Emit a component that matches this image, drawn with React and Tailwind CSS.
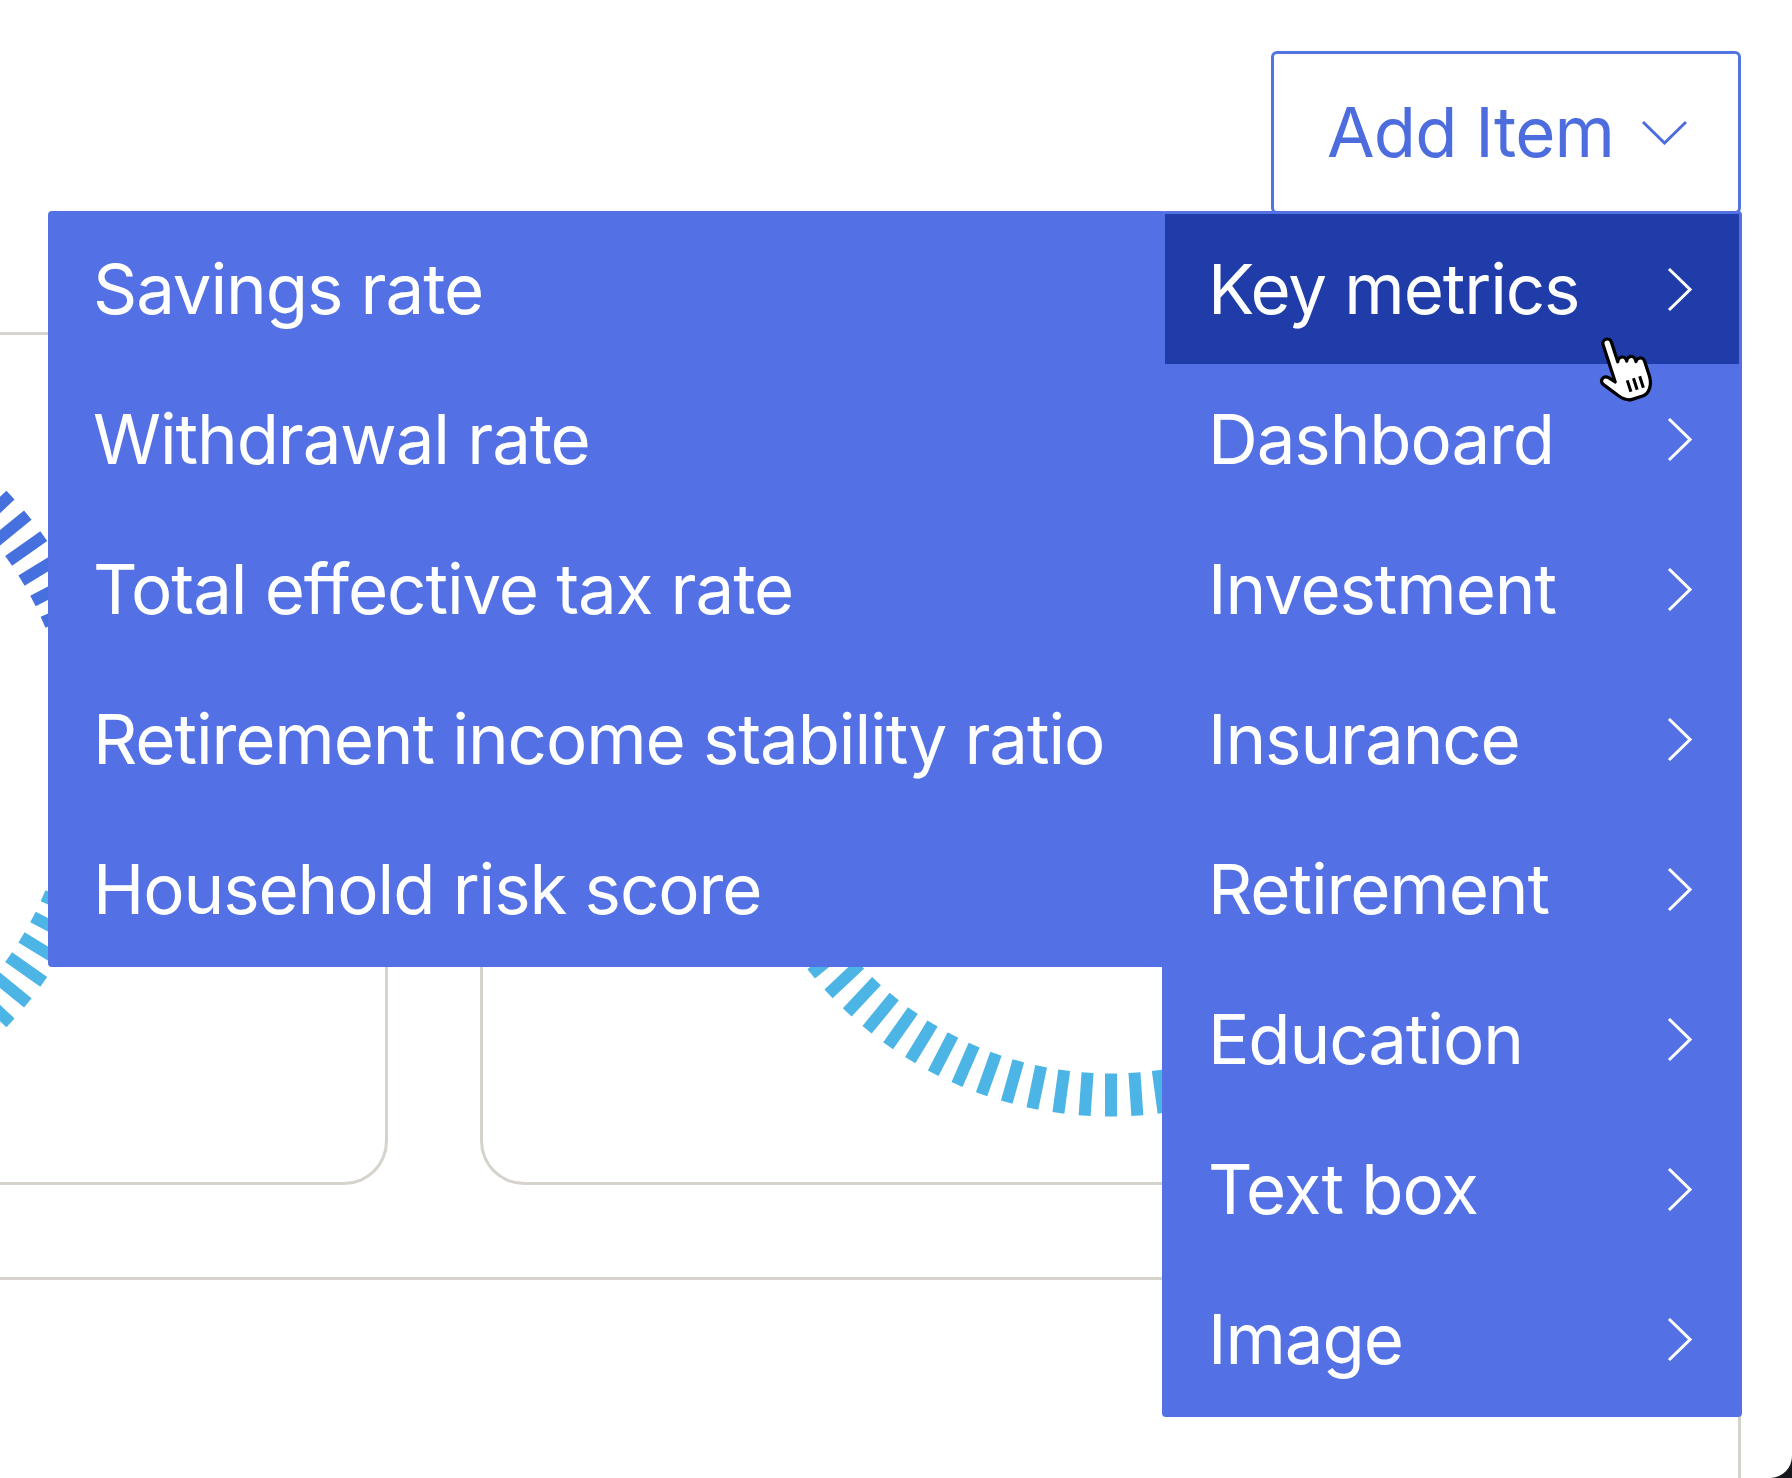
import React from 'react';

const SUB_ITEMS = [
  'Savings rate',
  'Withdrawal rate',
  'Total effective tax rate',
  'Retirement income stability ratio',
  'Household risk score',
];

const MENU_ITEMS = [
  'Key metrics',
  'Dashboard',
  'Investment',
  'Insurance',
  'Retirement',
  'Education',
  'Text box',
  'Image',
];

// Dashed ring gauge drawn as radial ticks
function Gauge({ progressEnd }) {
  const size = 774;
  const c = size / 2;
  const count = 92;
  const rIn = 343.5;
  const rOut = 386.5;
  const ticks = [];
  for (let i = 0; i < count; i++) {
    const deg = -90 + (i * 360) / count;
    const a = (deg * Math.PI) / 180;
    ticks.push(
      <line
        key={i}
        x1={c + rIn * Math.cos(a)}
        y1={c + rIn * Math.sin(a)}
        x2={c + rOut * Math.cos(a)}
        y2={c + rOut * Math.sin(a)}
        stroke={deg <= progressEnd ? '#4670de' : '#4db5e5'}
        strokeWidth="12"
      />
    );
  }
  return (
    <svg width={size} height={size} viewBox={`0 0 ${size} ${size}`} className="shrink-0">
      {ticks}
    </svg>
  );
}

function Chevron({ className }) {
  return (
    <svg width="25" height="45" viewBox="0 0 25 45" className={className} fill="none">
      <path d="M2 2 L23 22.5 L2 43" stroke="currentColor" strokeWidth="3" />
    </svg>
  );
}

function HandCursor() {
  return (
    <svg width="70" height="74" viewBox="0 0 32 34" className="rotate-[-18deg]">
      <path
        d="M11 1 C12.1 1 13 1.9 13 3 L13 12.5 C13.3 11.6 14.1 11 15 11 C16.1 11 17 11.9 17 13 L17 13.5 C17.3 12.6 18.1 12 19 12 C20.1 12 21 12.9 21 14 L21 15 C21.3 14.4 22 14 22.8 14 C23.9 14 24.8 14.9 24.8 16 L24.8 23 C24.8 27 22.5 31 19 31 L14 31 C11.5 31 10 29.5 8.5 27.5 L3.5 20.5 C2.8 19.5 3 18.3 3.9 17.7 C4.8 17.1 6 17.3 6.7 18.2 L9 21 L9 3 C9 1.9 9.9 1 11 1 Z"
        fill="#ffffff"
        stroke="#000000"
        strokeWidth="1.5"
        strokeLinejoin="round"
      />
      <path d="M14.5 22 V27.5 M17.5 22 V27.5 M20.5 22 V27.5" stroke="#000000" strokeWidth="1.4" />
    </svg>
  );
}

export default function App() {
  return (
    <div className="w-[1792px] h-[1478px] bg-[#16181d] overflow-hidden">
      <div
        className="relative w-full h-full bg-white rounded-br-[22px] overflow-hidden"
        style={{ fontFamily: 'Inter, "Liberation Sans", sans-serif' }}
      >
        {/* Toolbar */}
        <div className="flex justify-end pt-[51px] pr-[51px]">
          <button className="w-[470px] h-[163px] flex items-center justify-between pl-[53px] pr-[50px] border-[3px] border-[#5473e2] rounded-[6px] bg-white text-[#4d6ddf]">
            <span className="text-[69px] leading-none tracking-[-0.8px]">Add Item</span>
            <svg width="47" height="25" viewBox="0 0 47 25" fill="none">
              <path d="M2 2 L23.5 23 L45 2" stroke="currentColor" strokeWidth="3" />
            </svg>
          </button>
        </div>

        {/* Board behind the menu */}
        <div className="ml-[-930px] w-[2671px] mt-[118px] flex flex-col border-r-[3px] border-[#d6d2cc] h-[1300px]">
          <div className="flex gap-[92px] h-[853px]">
            <div className="w-[1318px] shrink-0 flex justify-center pt-[37px] border-t-[3px] border-r-[3px] border-b-[3px] border-[#d6d2cc] rounded-r-[44px]">
              <Gauge progressEnd={12} />
            </div>
            <div className="flex-1 flex justify-center pt-[8px] border-t-[3px] border-l-[3px] border-b-[3px] border-[#d6d2cc] rounded-l-[44px]">
              <Gauge progressEnd={40} />
            </div>
          </div>
          <div className="h-[95px] border-b-[3px] border-[#d6d2cc]" />
        </div>

        {/* Cascading menu */}
        <div className="absolute top-[211px] left-[48px] flex items-start text-white text-[69px] leading-none tracking-[-1.1px]">
          <div className="w-[1118px] py-[3px] bg-[#5371e5] rounded-[4px]">
            {SUB_ITEMS.map((label) => (
              <div key={label} className="h-[150px] flex items-center pl-[45px] whitespace-nowrap">
                {label}
              </div>
            ))}
          </div>
          <div className="w-[580px] -ml-[4px] p-[3px] bg-[#5371e5] rounded-[4px]">
            {MENU_ITEMS.map((label, i) => (
              <div
                key={label}
                className={`h-[150px] flex items-center justify-between pl-[43px] pr-[47px] ${
                  i === 0 ? 'bg-[#1f3ca9]' : ''
                }`}
              >
                <span>{label}</span>
                <Chevron />
              </div>
            ))}
          </div>
        </div>

        {/* Pointer */}
        <div className="absolute left-[1592px] top-[332px]">
          <HandCursor />
        </div>
      </div>
    </div>
  );
}
